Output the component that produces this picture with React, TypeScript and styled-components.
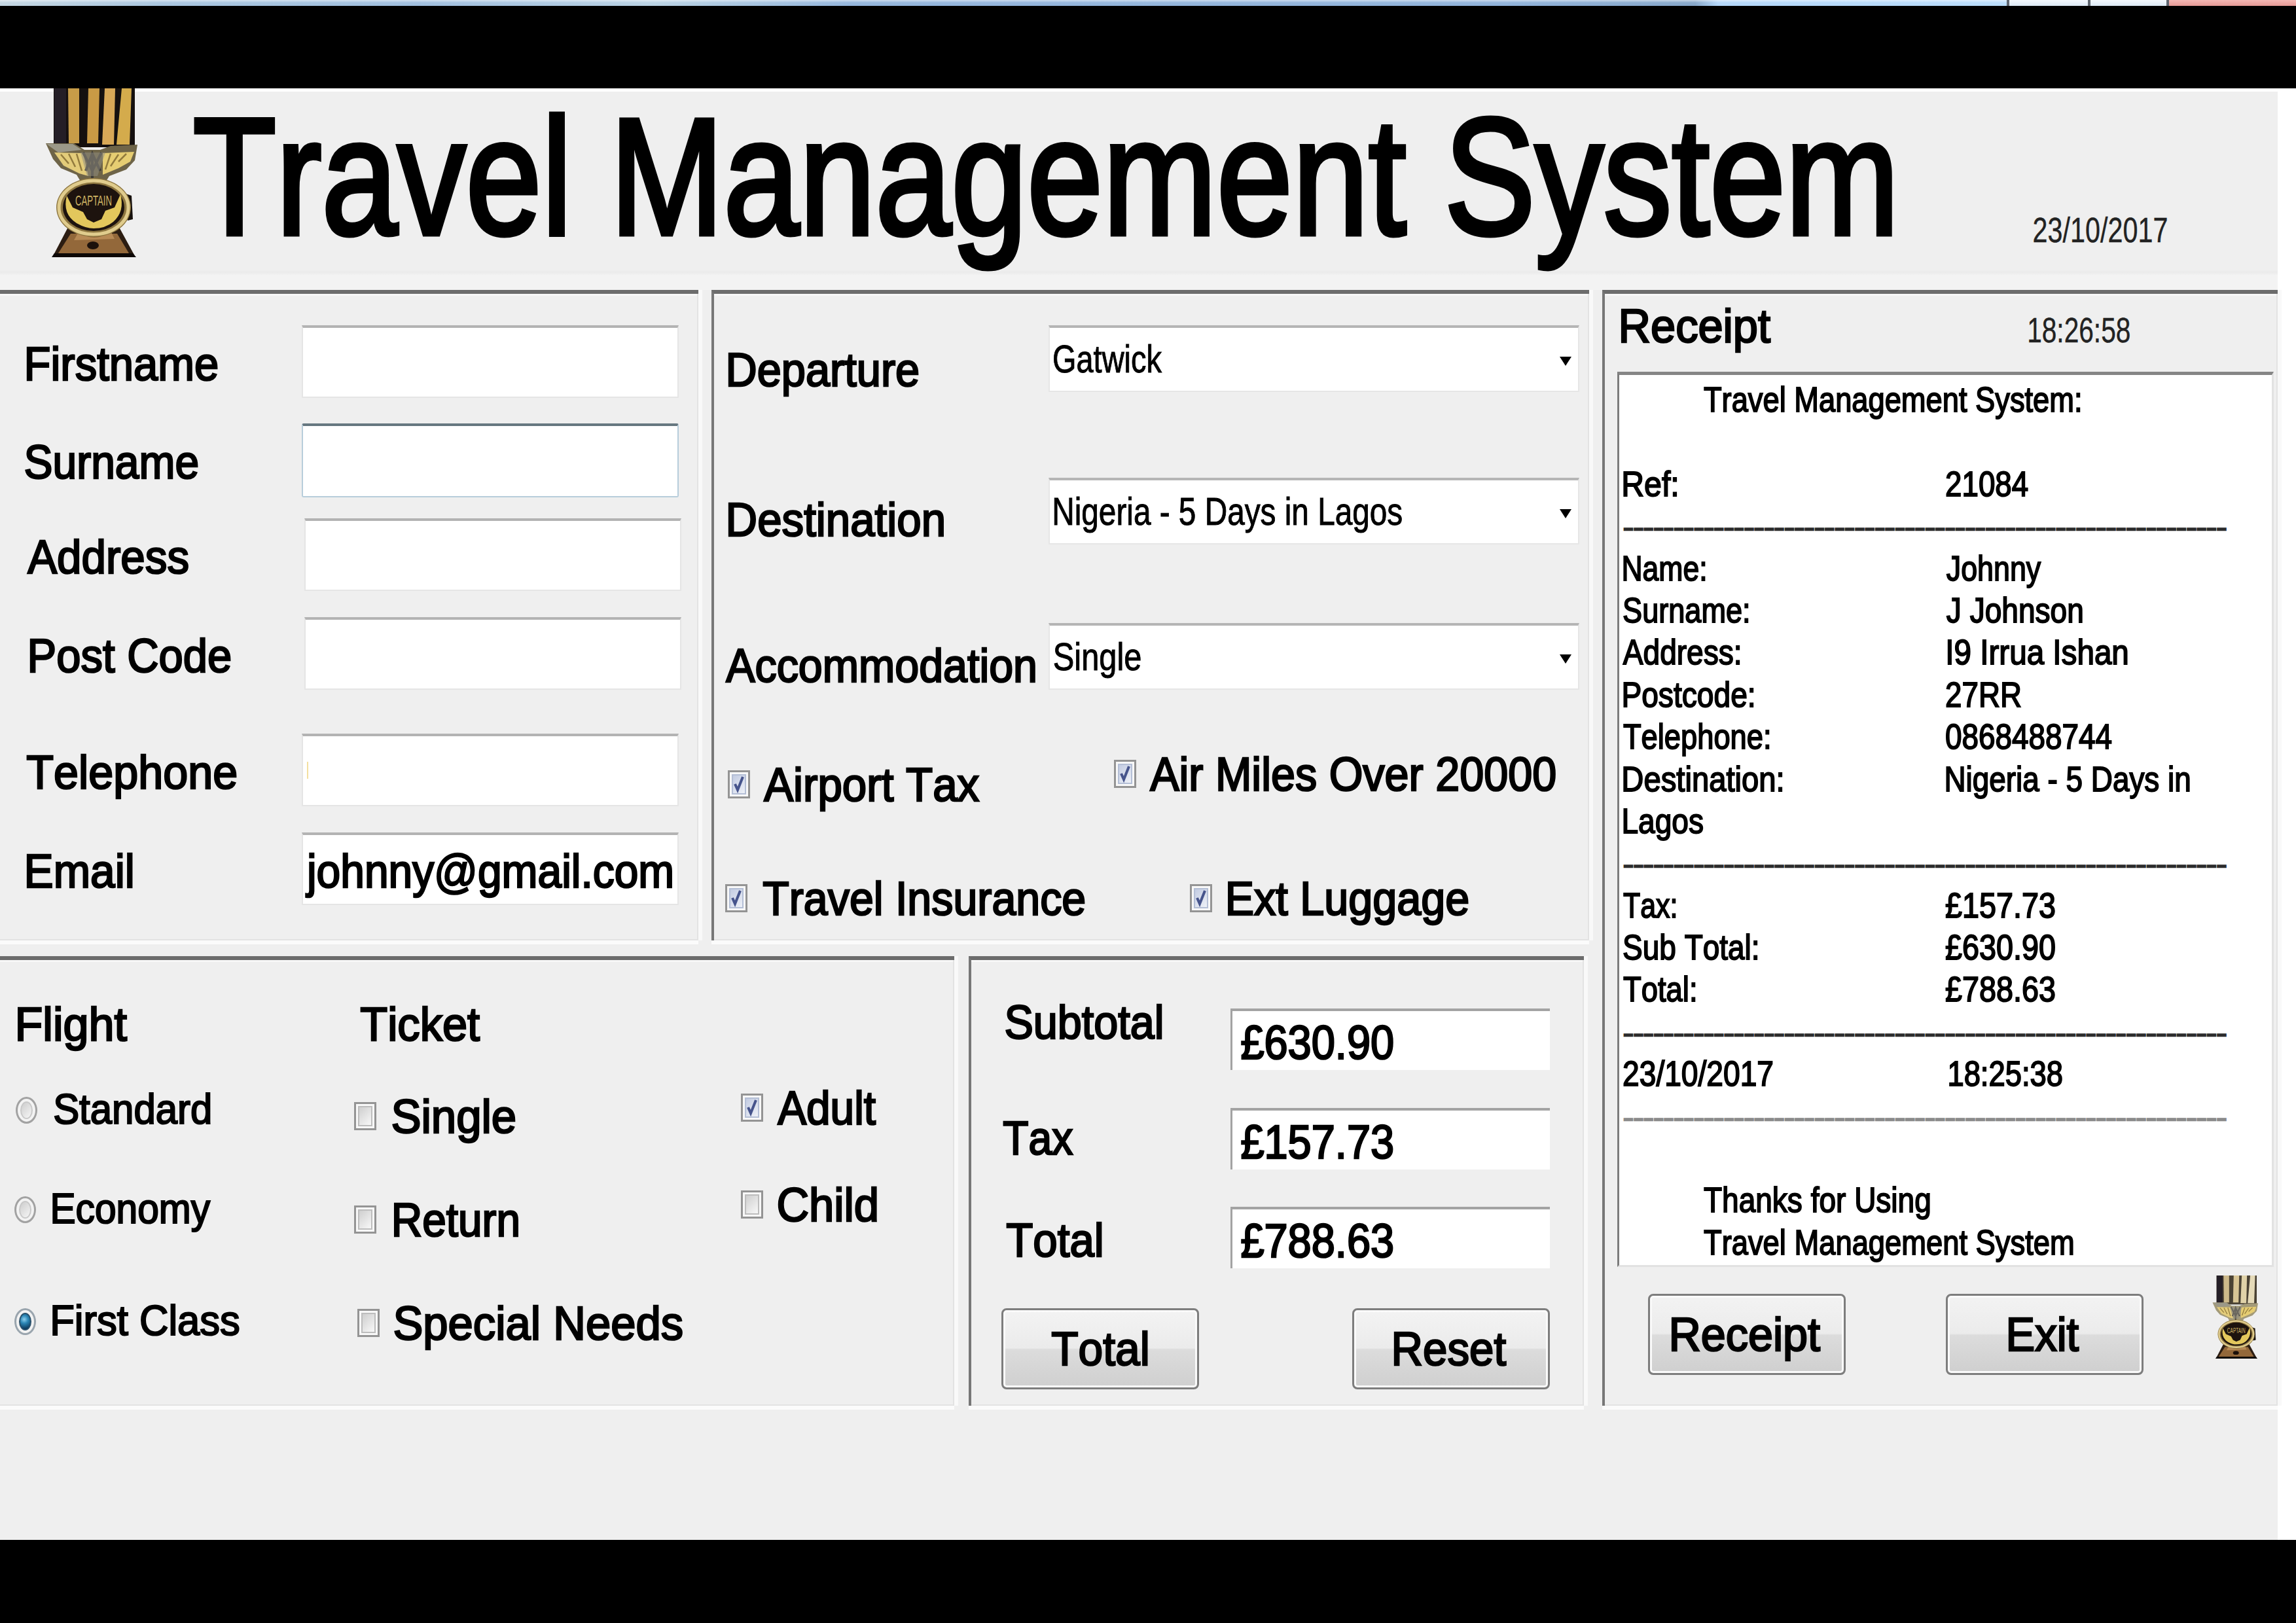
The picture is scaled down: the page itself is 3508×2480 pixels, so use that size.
import React, { useLayoutEffect, useState } from "react";
import styled, { createGlobalStyle } from "styled-components";

const FACE = '"Liberation Sans", Arial, sans-serif';

const GlobalStyle = createGlobalStyle`
  html, body { margin: 0; padding: 0; background: #000; }
  * { box-sizing: border-box; }
  body { width: 3508px; height: 2480px; overflow: hidden; font-family: ${FACE}; color: #000; }
  button { font-family: inherit; color: inherit; }
`;

/* ---------- condensed text ---------- */

interface TextBox { $w: number; $size: number; $line: number; $ml?: number; $mt?: number }

const TextSlot = styled.span<TextBox>`
  display: block;
  flex: none;
  width: ${p => p.$w}px;
  height: ${p => p.$line}px;
  margin-left: ${p => p.$ml ?? 0}px;
  margin-top: ${p => p.$mt ?? 0}px;
  font-size: ${p => p.$size}px;
  line-height: ${p => p.$line}px;
  font-kerning: none;
  text-align: left;
  white-space: pre;
`;

const Glyphs = styled.span<{ $stroke: number; $color: string }>`
  display: inline-block;
  transform-origin: 0 0;
  color: ${p => p.$color};
  -webkit-text-stroke: ${p => p.$stroke}px ${p => p.$color};
`;

interface TextProps {
  children: string;
  w: number;
  size?: number;
  ml?: number;
  mt?: number;
  line?: number;
  stroke?: number;
  color?: string;
  drop?: number;
}

/* Condenses a line of text so that its glyphs, outline included, span exactly `w` pixels. */
function Text({ children, w, size = 73, ml, mt, line = 77, stroke = 2.6, color = "#000", drop = 0.5 }: TextProps) {
  const [fit, setFit] = useState("none");
  useLayoutEffect(() => {
    const ctx = document.createElement("canvas").getContext("2d");
    if (!ctx) return;
    ctx.font = `${size}px ${FACE}`;
    ctx.fontKerning = "none";
    const m = ctx.measureText(children);
    const ink = m.actualBoundingBoxRight + m.actualBoundingBoxLeft + stroke;
    setFit(`translateY(${drop}px) scaleX(${w / ink}) translateX(${m.actualBoundingBoxLeft + stroke / 2}px)`);
  }, [children, w, size, stroke, drop]);
  return (
    <TextSlot $w={w} $size={size} $ml={ml} $mt={mt} $line={line}>
      <Glyphs $stroke={stroke} $color={color} style={{ transform: fit }}>{children}</Glyphs>
    </TextSlot>
  );
}

/* ---------- frame ---------- */

const Screen = styled.div`
  width: 3508px;
  height: 2480px;
  display: flex;
  flex-direction: column;
  background: #000;
`;

const TitleStrip = styled.div`
  flex: none;
  height: 9px;
  display: flex;
  background:
    linear-gradient(rgba(255, 255, 255, 0.55) 0, rgba(255, 255, 255, 0.05) 4px, transparent 9px),
    linear-gradient(90deg, #c4d6e2 0, #a9c6e0 250px, #9fbedf 640px, #b9d2e4 1000px, #93b5dc 1300px, #8fb2da 2300px, #85a6c9 2590px, #b3d7fa 2625px, #b9dcfb 3060px);
`;

const Caption = styled.div<{ $w: number; $close?: boolean }>`
  width: ${p => p.$w}px;
  border-left: 4px solid #5f6670;
  background: ${p => (p.$close ? "linear-gradient(#f3b8b4, #e69a96)" : "linear-gradient(#f4f9fe, #dce9f5)")};
`;

const StripSpace = styled.div`
  width: 3066px;
`;

const Letterbox = styled.div<{ $h: number }>`
  flex: none;
  height: ${p => p.$h}px;
  background: #000;
`;

const Desktop = styled.div`
  flex: none;
  height: 2218px;
  background: #fff;
  padding: 5px 28px 0 0;
`;

const Form = styled.main`
  height: 2213px;
  background: #efefef;
  display: flex;
  flex-direction: column;
`;

const Header = styled.header`
  flex: none;
  height: 303px;
  display: flex;
  align-items: flex-start;
  padding-left: 69px;
  background: linear-gradient(#efefef 272px, #ebebeb 276px, #f3f3f3 281px);
`;

const HeaderMedal = styled.div`
  flex: none;
  width: 141px;
  height: 258px;
  margin-top: -5px;
`;

const Board = styled.div`
  display: flex;
  gap: 20px;
`;

const Stack = styled.div`
  width: 2428px;
  flex: none;
  display: flex;
  flex-direction: column;
  gap: 24px;
`;

const Row = styled.div<{ $h?: number; $mt?: number; $gap?: number }>`
  display: flex;
  align-items: flex-start;
  gap: ${p => p.$gap ?? 0}px;
  ${p => (p.$h ? `height: ${p.$h}px;` : "")}
  margin-top: ${p => p.$mt ?? 0}px;
`;

const Panel = styled.section<{ $w: number; $h: number; $edge?: boolean; $pt?: number; $row?: boolean }>`
  flex: none;
  width: ${p => p.$w}px;
  height: ${p => p.$h}px;
  padding-top: ${p => p.$pt ?? 0}px;
  border-top: 6px solid #6c6c6c;
  border-left: ${p => (p.$edge ? "4px solid #777" : "0")};
  box-shadow: 6px 0 0 #f9f9f9, 0 6px 0 #fbfbfb, inset -2px -2px 0 #e3e3e3, inset 0 3px 0 #f7f7f7;
  background: #efefef;
  display: flex;
  flex-direction: ${p => (p.$row ? "row" : "column")};
  align-items: flex-start;
`;

/* ---------- fields ---------- */

const LabelCell = styled.div<{ $w: number; $pl: number; $pt?: number }>`
  flex: none;
  width: ${p => p.$w}px;
  padding-left: ${p => p.$pl}px;
  padding-top: ${p => p.$pt ?? 0}px;
`;

const Entry = styled.div<{ $focus?: boolean }>`
  flex: none;
  width: 576px;
  height: 111px;
  padding: 15px 0 0 4px;
  background: #fff;
  border: 2px solid ${p => (p.$focus ? "#b7cddb" : "#e5e5e5")};
  border-top: 4px solid ${p => (p.$focus ? "#667780" : "#b3b3b3")};
  ${p => (p.$focus ? "height: 113px; border-radius: 3px;" : "")}
`;

const Sliver = styled.div`
  width: 2px;
  height: 26px;
  margin: 24px 0 0 2px;
  background: #f3dfa0;
`;

const Select = styled.div`
  flex: none;
  width: 811px;
  height: 102px;
  display: flex;
  justify-content: space-between;
  padding: 15px 10px 0 6px;
  background: #fff;
  border: 2px solid #e6e6e6;
  border-top: 4px solid #b5b5b5;
`;

const Arrow = styled.i`
  width: 0;
  height: 0;
  margin-top: 29px;
  border: solid transparent;
  border-width: 14px 9px 0;
  border-top-color: #000;
`;

const Amount = styled.div<{ $mt?: number }>`
  flex: none;
  width: 488px;
  height: 94px;
  margin-top: ${p => p.$mt ?? 0}px;
  padding: 8px 0 0 13px;
  background: #fff;
  border-top: 4px solid #a3a3a3;
  border-left: 3px solid #a3a3a3;
`;

const PushButton = styled.button<{ $ml?: number; $mt?: number }>`
  flex: none;
  width: 302px;
  height: 124px;
  margin: ${p => p.$mt ?? 0}px 0 0 ${p => p.$ml ?? 0}px;
  padding: 19px 3px 0 0;
  display: flex;
  align-items: flex-start;
  justify-content: center;
  border: 3px solid #7d7d7d;
  border-radius: 8px;
  box-shadow: inset 0 0 0 3px #fafafa;
  background: linear-gradient(#f3f3f3 0, #ebebeb 49%, #dcdcdc 51%, #cfcfcf 100%);
`;

/* ---------- check boxes and radio buttons ---------- */

const Choice = styled.label<{ $ml?: number; $mt?: number }>`
  display: flex;
  flex: none;
  align-items: flex-start;
  margin-left: ${p => p.$ml ?? 0}px;
  margin-top: ${p => p.$mt ?? 0}px;
`;

const Square = styled.span`
  flex: none;
  width: 34px;
  height: 43px;
  margin-top: 18px;
  padding: 3px;
  border: 3px solid #949494;
  background: #f8f8f8;
`;

const SquareFace = styled.span<{ $on?: boolean }>`
  display: block;
  height: 100%;
  border: 2px solid ${p => (p.$on ? "#b4bfd6" : "#bdbdbd")};
  background: ${p => (p.$on ? "linear-gradient(135deg, #c3cce2, #eef1f8)" : "linear-gradient(135deg, #cfcfcf, #f8f8f8)")};
`;

const Tick = styled.svg`
  display: block;
  width: 18px;
  height: 27px;
  overflow: visible;
`;

const Round = styled.span<{ $on?: boolean }>`
  flex: none;
  width: 33px;
  height: 41px;
  margin-top: 16px;
  padding: 4px;
  border: 3px solid ${p => (p.$on ? "#9aa5ae" : "#a2a2a2")};
  border-radius: 50%;
  background: #f3f3f3;
`;

const RoundFace = styled.span<{ $on?: boolean }>`
  display: block;
  height: 100%;
  border-radius: 50%;
  border: 2px solid ${p => (p.$on ? "#29506b" : "#c9c9c9")};
  background: ${p => (p.$on ? "radial-gradient(circle at 40% 35%, #8fd0ee 0, #2b86b5 35%, #0e3f63 80%)" : "linear-gradient(135deg, #cdcdcd, #f6f6f6)")};
`;

interface CheckProps { label: string; w: number; gap: number; on?: boolean; ml?: number; mt?: number }

function Check({ label, w, gap, on, ml, mt }: CheckProps) {
  return (
    <Choice $ml={ml} $mt={mt}>
      <Square>
        <SquareFace $on={on}>
          {on && (
            <Tick viewBox="0 0 18 27">
              <path d="M3 13 L7 22 L15 2" fill="none" stroke="#46548c" strokeWidth="4" />
            </Tick>
          )}
        </SquareFace>
      </Square>
      <Text w={w} ml={gap}>{label}</Text>
    </Choice>
  );
}

function Radio({ label, w, on, ml, mt }: { label: string; w: number; on?: boolean; ml: number; mt: number }) {
  return (
    <Choice $ml={ml} $mt={mt}>
      <Round $on={on}><RoundFace $on={on} /></Round>
      <Text w={w} size={64} line={67} ml={25} stroke={2.2} drop={1.5}>{label}</Text>
    </Choice>
  );
}

const Column = styled.div<{ $w: number; $pt: number }>`
  flex: none;
  width: ${p => p.$w}px;
  padding-top: ${p => p.$pt}px;
  display: flex;
  flex-direction: column;
  align-items: flex-start;
`;

/* ---------- medal ---------- */

const MedalSvg = styled.svg`
  display: block;
  width: 100%;
  height: 100%;
`;

function Medal({ pale }: { pale?: boolean }) {
  const gold = pale ? "#cdb98a" : "#c79c48";
  return (
    <MedalSvg viewBox="0 0 141 258" preserveAspectRatio="none">
      <rect x="13" y="0" width="124" height="90" fill={pale ? "#4a4234" : "#15100f"} />
      <rect x="14" y="0" width="18" height="86" fill="#241e26" />
      <path d="M35 0h17v84h-16z" fill={gold} />
      <path d="M66 0h17l-2 84h-17z" fill={pale ? "#d8c595" : "#c99a45"} />
      <path d="M91 0h16l-2 86h-18z" fill={pale ? "#e0d2a8" : "#d8a857"} />
      <path d="M117 0h15l-3 86h-20z" fill={pale ? "#e5dab8" : "#d4ab4c"} />
      <path d="M1 84 L44 84 L60 94 L84 94 L100 88 L141 86 L137 110 L124 124 L98 134 L93 142 L54 142 L48 132 L24 122 L12 108 Z" fill={pale ? "#a39a78" : "#6e6448"} />
      <path d="M2 85 L42 85 L56 94 L20 98 Z" fill="#9b9888" />
      <path d="M14 98 L58 99 L66 134 L52 130 L28 118 Z" fill="#e3cc7a" />
      <path d="M88 99 L136 97 L130 112 L112 122 L88 132 Z" fill="#e6cd72" />
      <path d="M24 101l12 14M36 100l10 20M48 100l8 26M124 100l-12 12M112 101l-12 18M100 100l-8 24" stroke="#927b3d" strokeWidth="2.5" />
      <path d="M58 98 L72 126 L86 98 M62 126 L72 100 L84 126 M72 98 V140" fill="none" stroke="#3b3935" strokeWidth="4" />
      <path d="M54 98 L92 98 L80 134 L64 134 Z" fill="#8f8d80" opacity=".55" />
      <path d="M120 160 L132 164 L134 200 L126 202 Z" fill="#17110d" />
      <path d="M34 214 L114 214 L138 258 L11 258 Z" fill="#2c1d12" />
      <path d="M39 222 L110 222 L128 252 L20 252 Z" fill="#93683a" />
      <path d="M52 218 Q74 238 100 218 L106 230 L44 232 Z" fill="#b78a55" />
      <ellipse cx="74" cy="182" rx="57" ry="45" fill="#8d7640" />
      <ellipse cx="74" cy="182" rx="53" ry="41" fill="none" stroke="#e0cc8d" strokeWidth="5" />
      <ellipse cx="74" cy="182" rx="47" ry="36" fill="#1d130e" />
      <path d="M33 164 Q26 192 48 206 Q62 214 74 214 Q92 214 104 204 Q122 188 115 162 L106 182 L92 187 L86 200 L74 205 L64 200 L58 189 L42 182 Z" fill="#e3c75c" />
      <text x="74" y="179" textAnchor="middle" textLength="56" lengthAdjust="spacingAndGlyphs" fontFamily="Liberation Sans, sans-serif" fontSize="22" fill="#d0b565">CAPTAIN</text>
      <ellipse cx="73" cy="240" rx="9" ry="6" fill="#1c110b" />
      <path d="M10 258 L14 252 L134 252 L139 258 Z" fill="#0d0806" />
    </MedalSvg>
  );
}

/* ---------- receipt ---------- */

const ReceiptPaper = styled.div`
  flex: none;
  width: 1003px;
  height: 1368px;
  margin-left: 19px;
  padding-top: 3px;
  background: #fff;
  border: 3px solid #e2e2e2;
  border-top: 5px solid #858585;
  border-left: 3px solid #7c7c7c;
`;

const ReceiptLine = styled.div`
  display: flex;
  height: 64.4px;
`;

const ReceiptKey = styled.div`
  flex: none;
  width: 499px;
`;

const SmallMedal = styled.div`
  flex: none;
  width: 70px;
  height: 127px;
  margin: 13px 0 0 105px;
`;

function Printed({ children, w, ml }: { children: string; w: number; ml?: number }) {
  return <Text w={w} ml={ml} size={54} line={64.4} stroke={1.9} drop={1.5}>{children}</Text>;
}

function Pair({ k, kw, kx = 6, v, vw, vx = 0 }: { k: string; kw: number; kx?: number; v?: string; vw?: number; vx?: number }) {
  return (
    <ReceiptLine>
      <ReceiptKey><Printed w={kw} ml={kx}>{k}</Printed></ReceiptKey>
      {v && <Printed w={vw ?? 100} ml={vx}>{v}</Printed>}
    </ReceiptLine>
  );
}

function DashLine({ faint }: { faint?: boolean }) {
  return (
    <ReceiptLine>
      <Text w={922} ml={6} size={34} line={64.4} drop={4.5} stroke={2.5} color={faint ? "#8a8a8a" : "#2c2c2c"}>{"-".repeat(60)}</Text>
    </ReceiptLine>
  );
}

/* ---------- data ---------- */

const customer = [
  { label: "Firstname", x: 40, w: 293, col: 461, h: 150 },
  { label: "Surname", x: 38, w: 265, col: 461, h: 145, focus: true },
  { label: "Address", x: 41, w: 247, col: 465, h: 151 },
  { label: "Post Code", x: 45, w: 308, col: 465, h: 178 },
  { label: "Telephone", x: 40, w: 322, col: 461, h: 151, sliver: true },
  { label: "Email", x: 40, w: 163, col: 461, h: 111, value: "johnny@gmail.com" },
];

const trip = [
  { label: "Departure", x: 21, w: 292, pt: 28, value: "Gatwick", vw: 166, h: 233 },
  { label: "Destination", x: 21, w: 330, pt: 24, value: "Nigeria - 5 Days in Lagos", vw: 532, h: 222 },
  { label: "Accommodation", x: 17, w: 474, pt: 25, value: "Single", vw: 133, h: 191 },
];

export default function App() {
  return (
    <Screen>
      <GlobalStyle />
      <TitleStrip>
        <StripSpace />
        <Caption $w={124} />
        <Caption $w={120} />
        <Caption $w={198} $close />
      </TitleStrip>
      <Letterbox $h={126} />
      <Desktop>
        <Form>
          <Header>
            <HeaderMedal><Medal /></HeaderMedal>
            <Text w={2595} size={254} line={269} ml={86} mt={-8} stroke={7} drop={4}>Travel Management System</Text>
            <Text w={204} size={54} line={55} ml={216} mt={184} stroke={0.4} drop={-0.5} color="#222">23/10/2017</Text>
          </Header>
          <Board>
            <Stack>
              <Row $gap={20}>
                <Panel $w={1067} $h={994} $pt={48}>
                  {customer.map(f => (
                    <Row key={f.label} $h={f.h}>
                      <LabelCell $w={f.col} $pl={f.x} $pt={19}><Text w={f.w}>{f.label}</Text></LabelCell>
                      <Entry $focus={f.focus}>
                        {f.value && <Text w={561} ml={-1}>{f.value}</Text>}
                        {f.sliver && <Sliver />}
                      </Entry>
                    </Row>
                  ))}
                </Panel>
                <Panel $w={1341} $h={994} $edge $pt={48}>
                  {trip.map(f => (
                    <Row key={f.label} $h={f.h}>
                      <LabelCell $w={511} $pl={f.x} $pt={f.pt}><Text w={f.w}>{f.label}</Text></LabelCell>
                      <Select>
                        <Text w={f.vw} size={60} line={62} stroke={1} drop={1.5}>{f.value}</Text>
                        <Arrow />
                      </Select>
                    </Row>
                  ))}
                  <Row $h={190}>
                    <Check label="Airport Tax" w={331} gap={20} ml={21} mt={16} on />
                    <Check label="Air Miles Over 20000" w={621} gap={20} ml={205} on />
                  </Row>
                  <Row>
                    <Check label="Travel Insurance" w={493} gap={23} ml={17} on />
                    <Check label="Ext Luggage" w={369} gap={23} ml={160} on />
                  </Row>
                </Panel>
              </Row>
              <Row $gap={22}>
                <Panel $w={1458} $h={687} $row>
                  <Column $w={541} $pt={58}>
                    <Text w={169} ml={26}>Flight</Text>
                    <Radio label="Standard" w={240} ml={24} mt={58} />
                    <Radio label="Economy" w={242} ml={22} mt={85} />
                    <Radio label="First Class" w={286} ml={22} mt={104} on />
                  </Column>
                  <Column $w={591} $pt={58}>
                    <Text w={184} ml={9}>Ticket</Text>
                    <Check label="Single" w={189} gap={24} mt={64} />
                    <Check label="Return" w={191} gap={26} mt={81} />
                    <Check label="Special Needs" w={441} gap={22} ml={5} mt={81} />
                  </Column>
                  <Column $w={300} $pt={186}>
                    <Check label="Adult" w={152} gap={21} on />
                    <Check label="Child" w={152} gap={22} mt={71} />
                  </Column>
                </Panel>
                <Panel $w={940} $h={687} $edge $pt={55}>
                  <Row $h={171}>
                    <LabelCell $w={396} $pl={52}><Text w={240}>Subtotal</Text></LabelCell>
                    <Amount $mt={19}><Text w={233}>£630.90</Text></Amount>
                  </Row>
                  <Row $h={151}>
                    <LabelCell $w={396} $pl={48} $pt={6}><Text w={108}>Tax</Text></LabelCell>
                    <Amount><Text w={233}>£157.73</Text></Amount>
                  </Row>
                  <Row $h={155}>
                    <LabelCell $w={396} $pl={53} $pt={11}><Text w={147}>Total</Text></LabelCell>
                    <Amount><Text w={233}>£788.63</Text></Amount>
                  </Row>
                  <Row>
                    <PushButton $ml={46}><Text w={148}>Total</Text></PushButton>
                    <PushButton $ml={234}><Text w={173}>Reset</Text></PushButton>
                  </Row>
                </Panel>
              </Row>
            </Stack>
            <Panel $w={1032} $h={1705} $edge>
              <Row $h={119}>
                <Text w={230} ml={24} mt={9}>Receipt</Text>
                <Text w={154} size={54} line={56} ml={394} mt={27} stroke={0.4} drop={0} color="#222">18:26:58</Text>
              </Row>
              <ReceiptPaper>
                <ReceiptLine><Printed w={576} ml={129}>Travel Management System:</Printed></ReceiptLine>
                <ReceiptLine />
                <Pair k="Ref:" kw={83} v="21084" vw={126} />
                <DashLine />
                <Pair k="Name:" kw={126} v="Johnny" vw={146} />
                <Pair k="Surname:" kw={192} v="J Johnson" vw={209} />
                <Pair k="Address:" kw={180} kx={5} v="I9 Irrua Ishan" vw={276} vx={2} />
                <Pair k="Postcode:" kw={200} v="27RR" vw={115} />
                <Pair k="Telephone:" kw={224} v="0868488744" vw={254} />
                <Pair k="Destination:" kw={244} v="Nigeria - 5 Days in" vw={373} />
                <Pair k="Lagos" kw={123} />
                <DashLine />
                <Pair k="Tax:" kw={81} v="£157.73" vw={168} vx={-1} />
                <Pair k="Sub Total:" kw={206} v="£630.90" vw={168} vx={-1} />
                <Pair k="Total:" kw={111} v="£788.63" vw={168} vx={-1} />
                <DashLine />
                <Pair k="23/10/2017" kw={229} v="18:25:38" vw={173} vx={5} />
                <DashLine faint />
                <ReceiptLine />
                <ReceiptLine><Printed w={346} ml={129}>Thanks for Using</Printed></ReceiptLine>
                <ReceiptLine><Printed w={565} ml={129}>Travel Management System</Printed></ReceiptLine>
              </ReceiptPaper>
              <Row>
                <PushButton $ml={66} $mt={41}><Text w={229}>Receipt</Text></PushButton>
                <PushButton $ml={153} $mt={41}><Text w={109}>Exit</Text></PushButton>
                <SmallMedal><Medal pale /></SmallMedal>
              </Row>
            </Panel>
          </Board>
        </Form>
      </Desktop>
      <Letterbox $h={127} />
    </Screen>
  );
}
